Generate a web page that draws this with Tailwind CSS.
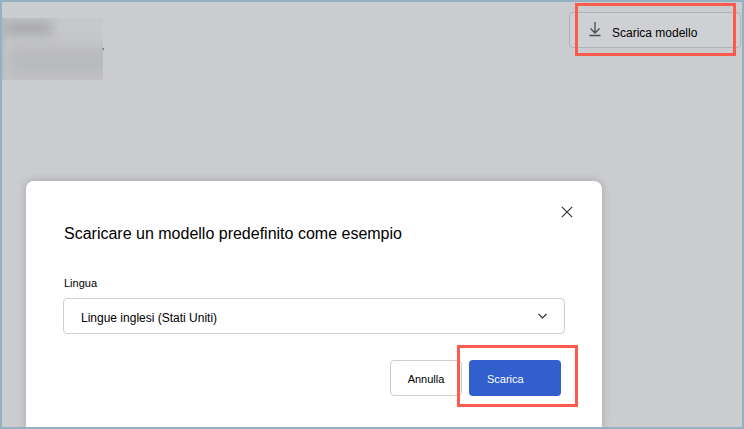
<!DOCTYPE html>
<html lang="it">
<head>
  <meta charset="utf-8">
  <title>Scarica modello</title>
  <script src="https://cdn.jsdelivr.net/npm/@tailwindcss/browser@4"></script>
</head>
<body class="flex flex-col h-screen overflow-hidden border-2 border-[#93b1c0] bg-[#cbccd0] font-['Liberation_Sans',Arial,sans-serif] text-xs text-black">

<header class="flex items-start justify-between pt-[10px] pr-px pb-[101px]">
  <!-- redacted account name -->
  <div class="flex items-start mt-1.5 -ml-0.5" aria-hidden="true">
    <div class="w-[103px] h-[62px] overflow-hidden bg-linear-to-r from-[#a9bcc6] to-[#c7c8cb] to-8%">
      <div class="w-12 h-3 mt-1 ml-1 bg-[#a2a3a6] blur-[6px]"></div>
      <div class="w-28 h-8 mt-3 ml-2 bg-[#b9babd] blur-[7px]"></div>
    </div>
    <div class="w-0.5 h-0.5 mt-[30px] -ml-px bg-[#77787b]"></div>
  </div>

  <div class="relative">
    <button type="button" class="flex items-center w-[172px] h-9 pl-[19px] pt-px gap-[11px] rounded border border-[#b1b2b6] bg-[#cfd0d4]">
      <svg class="w-3 h-4 -mt-1" viewBox="0 0 12 16" fill="none" stroke="#4b4c50" stroke-width="1.3">
        <path d="M6 1v11M1.500 7.500L6 12l4.500-4.500M.5 14.500h11"/>
      </svg>
      <span class="mt-1">Scarica modello</span>
    </button>
    <div class="absolute -top-[9px] left-1.5 w-[161px] h-[53px] border-3 border-[#fb5b4d] pointer-events-none"></div>
  </div>
</header>

<main role="dialog" aria-labelledby="title" class="flex-1 w-full max-w-xl ml-6 px-[37px] rounded-t-lg bg-white shadow-[0_0_8px_rgba(0,0,0,0.2)]">
  <div class="flex justify-end pt-[23px] -mr-2.5">
    <button type="button" aria-label="Chiudi" class="p-0.5">
      <svg class="size-3" viewBox="0 0 12 12" fill="none" stroke="#323337" stroke-width="1.2">
        <path d="M.8.8l10.400 10.400M11.200.8L.8 11.200"/>
      </svg>
    </button>
  </div>
  <h1 id="title" class="ml-px mt-0.5 text-base">Scaricare un modello predefinito come esempio</h1>

  <label for="language" class="block ml-px mt-[29px] text-[11px] leading-4">Lingua</label>
  <div class="relative mt-[7px]">
    <select id="language" class="block w-full h-9 pl-[17px] pt-1 appearance-none rounded border border-[#cfcfd1] bg-white">
      <option>Lingue inglesi (Stati Uniti)</option>
    </select>
    <svg class="absolute right-[18px] top-[15px] w-[9px] h-[6px] pointer-events-none" viewBox="0 0 9 6" fill="none" stroke="#323337" stroke-width="1.2">
      <path d="M.5 1l4 4 4-4"/>
    </svg>
  </div>

  <div class="flex justify-end gap-[7px] mt-[26px] mr-1">
    <button type="button" class="w-[72px] h-9 pt-0.5 rounded border border-[#cfcfd1] bg-white text-[11px]">Annulla</button>
    <div class="relative">
      <button type="button" class="block w-[92px] h-9 pl-[18px] pt-0.5 rounded bg-[#315fce] text-left text-[11px] text-white">Scarica</button>
      <div class="absolute -top-[15px] -left-3 w-[121px] h-[62px] border-3 border-[#fb5b4d] pointer-events-none"></div>
    </div>
  </div>
</main>

</body>
</html>
